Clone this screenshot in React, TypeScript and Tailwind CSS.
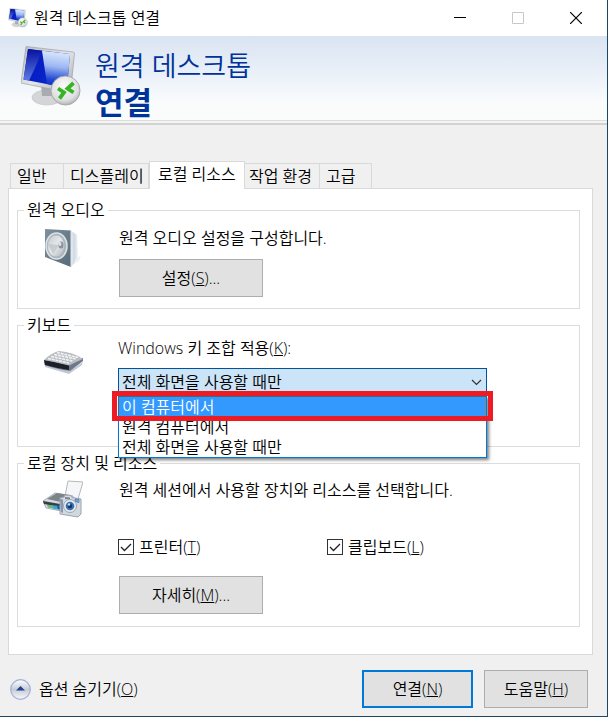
import { FC, ReactNode, useState } from 'react';

interface GroupProps {
  title: string;
  className?: string;
  icon: ReactNode;
  children: ReactNode;
}

const tabs = [
  { name: '일반', style: 'w-[54px] pl-[6px]' },
  { name: '디스플레이', style: 'w-[85px] pl-[6px]' },
  { name: '로컬 리소스', style: 'w-[96px] pl-[8px]' },
  { name: '작업 환경', style: 'w-[75px] pl-[4px]' },
  { name: '고급', style: 'w-[52px] pl-[6px]' },
];

const keyboardModes = ['이 컴퓨터에서', '원격 컴퓨터에서', '전체 화면을 사용할 때만'];

const RemoteIcon: FC<{ className: string }> = ({ className }) => (
  <svg className={className} viewBox="0 0 60 62" aria-hidden="true">
    <defs>
      <linearGradient id="screen" x1="0" y1="0.2" x2="1" y2="0.7">
        <stop offset="0" stopColor="#0a18b0" />
        <stop offset="0.45" stopColor="#0620c8" />
        <stop offset="1" stopColor="#0a34c4" />
      </linearGradient>
      <linearGradient id="glare" x1="0.3" y1="0" x2="0.2" y2="1">
        <stop offset="0" stopColor="#dbe8fc" />
        <stop offset="0.4" stopColor="#9db8f2" />
        <stop offset="0.75" stopColor="#2448d4" />
        <stop offset="1" stopColor="#0a28c4" />
      </linearGradient>
      <linearGradient id="beam" x1="0" y1="0" x2="0" y2="1">
        <stop offset="0" stopColor="#0512a0" />
        <stop offset="1" stopColor="#5d7ae6" />
      </linearGradient>
      <linearGradient id="metal" x1="0" y1="0" x2="1" y2="1">
        <stop offset="0" stopColor="#b9bcbe" />
        <stop offset="0.5" stopColor="#e4e5e6" />
        <stop offset="1" stopColor="#a5a7a9" />
      </linearGradient>
      <radialGradient id="badge" cx="0.45" cy="0.35" r="0.65">
        <stop offset="0" stopColor="#fbfbfb" />
        <stop offset="0.75" stopColor="#dedfe0" />
        <stop offset="1" stopColor="#b2b4b6" />
      </radialGradient>
    </defs>
    <ellipse cx="26" cy="51.500" rx="15" ry="7.500" fill="#d3d5d7" stroke="#c4c6c8" strokeWidth="0.700" />
    <path d="M20 38h13l-1 12h-11z" fill="#a9acaf" />
    <path d="M5 0.500 52 6l1.500 1-4 40L0 37z" fill="url(#metal)" stroke="#9fa2a5" strokeWidth="0.700" />
    <path d="M7 3 49 8l-3 34L2.500 33.500z" fill="url(#screen)" />
    <path d="M21 4.700 49 8l-3 34-20-4z" fill="url(#glare)" />
    <path d="M7 3 21 4.700 14 22l-6 12.500-5.500-1z" fill="url(#beam)" />
    <circle cx="44.500" cy="44.500" r="14.500" fill="url(#badge)" stroke="#a7a9ab" />
    <path d="m37 42.500 6 4-4.500 6M52.500 37l-6 5.500 6 4" fill="none" stroke="#35b524" strokeWidth="3.800" />
  </svg>
);

const SpeakerIcon: FC = () => (
  <svg className="h-10 w-10" viewBox="0 0 40 40" aria-hidden="true">
    <defs>
      <linearGradient id="side" x1="0" x2="1">
        <stop offset="0" stopColor="#f5f8fb" />
        <stop offset="0.5" stopColor="#cfd9e4" />
        <stop offset="1" stopColor="#eef2f6" />
      </linearGradient>
      <linearGradient id="front" x1="0" y1="0" x2="1" y2="1">
        <stop offset="0" stopColor="#7f909d" />
        <stop offset="1" stopColor="#566a78" />
      </linearGradient>
      <linearGradient id="cone" x1="0" y1="0" x2="1" y2="1">
        <stop offset="0" stopColor="#c3c9ce" />
        <stop offset="0.5" stopColor="#e6e9eb" />
        <stop offset="1" stopColor="#abb2b8" />
      </linearGradient>
    </defs>
    <path d="m27 2 7 5 1 24-7 8z" fill="url(#side)" />
    <path d="m32 32 6-5-2 6-5 3z" fill="#eef0f2" />
    <path d="m2 1 26 1.500V39L2 29z" fill="url(#front)" />
    <path d="m27.500 2.500 1.500 0.500v35.500l-1.500 0.500z" fill="#dfe6ec" />
    <ellipse cx="13.500" cy="18" rx="10.500" ry="13" fill="#aab4bc" stroke="#dde2e5" strokeWidth="1.500" />
    <ellipse cx="13" cy="18" rx="8.500" ry="11" fill="url(#cone)" stroke="#a5aeb4" strokeWidth="0.500" />
    <path d="m5 16 11 1-6 9z" fill="#b5bcc1" opacity="0.600" />
    <ellipse cx="18" cy="17" rx="2.500" ry="3.500" fill="#87929a" />
    <ellipse cx="17" cy="16" rx="1.500" ry="2" fill="#dfe3e6" />
  </svg>
);

const KeyboardIcon: FC = () => (
  <svg className="h-10 w-10" viewBox="0 0 40 40" aria-hidden="true">
    <path d="M1 24 26 33l14-9-1 3-13 9L2 29z" fill="#9aa3b8" opacity="0.600" />
    <path d="m1 22 1 5q11 4 25 6l13-10v-3z" fill="#6f778b" />
    <path d="m1 22 1 5q11 3 24 5v-5z" fill="#1d2026" />
    <path d="M1 22q7-7 15-9 14 1 24 8-7 3-14 6.500-13-3.500-25-5.500z" fill="#b9bcc1" />
    <g stroke="#f2f3f5" strokeWidth="1.600" strokeDasharray="3 0.800">
      <path d="m5 20.500 21 4.500" />
      <path d="m8 18.500 21.500 4.500" />
      <path d="m11 16.500 22 4.500" />
      <path d="m14 14.500 21 5" />
    </g>
  </svg>
);

const DevicesIcon: FC = () => (
  <svg className="h-10 w-10" viewBox="0 0 40 40" aria-hidden="true">
    <path d="m25 2 15 1-5 17-13-3z" fill="#f5f6f7" stroke="#b4b8bc" />
    <path d="m0 22 12-8 18 3v9l-12 6-15-3z" fill="#d5d9dd" stroke="#8f969c" strokeWidth="0.700" />
    <path d="m4 20 10-6 12 2-8 7z" fill="#7c848a" />
    <path d="m0 22 17 3v3L1 25z" fill="#383e43" />
    <path d="m5 26 12 1 2 4-8-1z" fill="#36a7d6" />
    <path d="m4 26 5 0.500 2 3-6-1z" fill="#69b86c" />
    <path d="m14 27 3 0.500 2 3.500-4-1z" fill="#1a4d9c" />
    <path d="m17 19 4-1 1-2 6 0.500 1 2 9 1.500v15l-3 3-18-3z" fill="#d3d8de" stroke="#9aa4b0" />
    <path d="m17 20 3 0.500V34l-2-1z" fill="#8798ab" />
    <path d="m22 18 5 0.500v2L22 20z" fill="#778799" />
    <path d="m32 20 4 0.500v3l-4-1z" fill="#6fa5df" stroke="#3c6ca8" strokeWidth="0.600" />
    <circle cx="27" cy="27" r="6.500" fill="#e6eaee" stroke="#9ba8b7" />
    <circle cx="27" cy="27" r="4.300" fill="#3b6faf" />
    <circle cx="27" cy="27" r="2.200" fill="#16345f" />
    <circle cx="26" cy="25.500" r="1.200" fill="#b5dcff" />
  </svg>
);

const Group: FC<GroupProps> = ({ title, className, icon, children }) => (
  <fieldset className={`border border-[#dcdcdc] ${className}`}>
    <legend className="ml-[6px] px-[3px]">{title}</legend>
    <div className="grid grid-cols-[100px_1fr]">
      <div className="pl-[25px]">{icon}</div>
      <div>{children}</div>
    </div>
  </fieldset>
);

const CheckOption: FC<{ id: string; label: string; accessKey: string }> = ({ id, label, accessKey }) => (
  <div className="flex items-center gap-[5px]">
    <span className="relative flex h-4 w-4">
      <input id={id} type="checkbox" defaultChecked className="peer h-4 w-4 appearance-none border border-[#333333] bg-white" />
      <svg className="pointer-events-none absolute inset-0 hidden h-4 w-4 peer-checked:block" viewBox="0 0 16 16" aria-hidden="true">
        <path d="m3 8 3.500 3.500L13 5" fill="none" stroke="#222" strokeWidth="1.300" />
      </svg>
    </span>
    <label htmlFor={id}>
      {label}(<u>{accessKey}</u>)
    </label>
  </div>
);

const App: FC = () => {
  const [activeTab, setActiveTab] = useState('로컬 리소스');
  const [mode, setMode] = useState(keyboardModes[2]);
  const buttonStyle = 'h-[38px] border border-[#adadad] bg-[#e1e1e1]';

  return (
    <div className="bg-white pr-1 font-['Open_Sans','Noto_Sans_CJK_KR',sans-serif] text-[16px] leading-[22px] font-[350] text-black">
      <div className="border-r border-b border-[#1c4766] bg-[#f0f0f0]">
        <header className="flex h-9 items-center bg-white pl-2">
          <RemoteIcon className="h-5 w-5" />
          <h1 className="ml-[6px] grow">원격 데스크톱 연결</h1>
          <div className="flex pr-[2px]">
            <button aria-label="최소화" className="flex h-9 w-[58px] items-center justify-center">
              <svg className="h-3 w-3" viewBox="0 0 12 12"><path d="M0 5.500h12" stroke="#000" /></svg>
            </button>
            <button aria-label="최대화" disabled className="flex h-9 w-[58px] items-center justify-center">
              <svg className="h-3 w-3" viewBox="0 0 12 12"><path d="M.5.5h11v11H.5z" fill="none" stroke="#c8c8c8" /></svg>
            </button>
            <button aria-label="닫기" className="flex h-9 w-[58px] items-center justify-center">
              <svg className="h-3 w-3" viewBox="0 0 12 12"><path d="m0 0 12 12M12 0 0 12" stroke="#000" strokeWidth="1.200" /></svg>
            </button>
          </div>
        </header>

        <div className="flex h-[84px] bg-linear-to-b from-[#dae4f1] via-[#e8eff8] via-40% to-[#fafcfc] to-80% pl-[21px]">
          <RemoteIcon className="mt-[10px] h-[62px] w-[60px]" />
          <h2 className="ml-[14px] pt-3 text-[#003399]">
            <span className="block text-[27px] leading-9">원격 데스크톱</span>
            <span className="block text-[31px] leading-9 font-bold">연결</span>
          </h2>
        </div>
        <div className="h-[5px] border-t border-b-2 border-t-[#dddddd] border-b-[#d2d2d2] bg-[#f4f4f4]" />

        <main className="pt-9 pr-[14px] pl-2">
          <div role="tablist" className="relative z-10 -mb-px flex items-end pl-[2px]">
            {tabs.map((tab) => (
              <button
                key={tab.name}
                role="tab"
                aria-selected={tab.name === activeTab}
                onClick={() => setActiveTab(tab.name)}
                className={`border-[#d9d9d9] text-left whitespace-nowrap ${tab.style} ${
                  tab.name === activeTab ? 'h-7 border-x border-t bg-white pb-[3px]' : 'h-[26px] border-y border-r bg-[#f0f0f0] first:border-l'
                }`}
              >
                {tab.name}
              </button>
            ))}
          </div>

          <div role="tabpanel" className="border border-[#d9d9d9] bg-white pt-[10px] pr-3 pb-[27px] pl-2">
            <Group title="원격 오디오" className="pb-[11px]" icon={<div className="pt-[7px]"><SpeakerIcon /></div>}>
              <p className="pt-[6px] pb-[10px] pl-px">원격 오디오 설정을 구성합니다.</p>
              <button className={`ml-px w-36 ${buttonStyle}`}>
                설정(<u>S</u>)...
              </button>
            </Group>

            <Group title="키보드" className="mt-[5px] pb-[50px]" icon={<div className="pt-[2px]"><KeyboardIcon /></div>}>
              <label htmlFor="keyboard-mode" className="block pt-px pb-[9px]">
                Windows 키 조합 적용(<u>K</u>):
              </label>
              <div className="relative h-7 w-[369px]">
                <select
                  id="keyboard-mode"
                  value={mode}
                  onChange={(e) => setMode(e.target.value)}
                  className="h-7 w-full appearance-none border border-[#005499] bg-[#cce4f7] pl-[3px]"
                >
                  {keyboardModes.map((item) => (
                    <option key={item}>{item}</option>
                  ))}
                </select>
                <svg className="pointer-events-none absolute top-[11px] right-[5px] h-[7px] w-[11px]" viewBox="0 0 11 7" aria-hidden="true">
                  <path d="m1 1 4.500 4.500L10 1" fill="none" stroke="#333" strokeWidth="1.200" />
                </svg>
                <ul
                  role="listbox"
                  className="absolute top-7 left-0 z-20 w-full border border-[#0078d7] bg-white leading-5 shadow-[2px_2px_3px_rgba(0,0,0,0.5)]"
                >
                  {keyboardModes.map((item, i) => (
                    <li
                      key={item}
                      role="option"
                      aria-selected={i === 0}
                      onClick={() => setMode(item)}
                      className={`h-5 pl-[3px] ${i === 0 ? 'bg-[#3399ff] text-white outline-1 -outline-offset-1 outline-dotted outline-[#b97a3a]' : ''}`}
                    >
                      {item}
                    </li>
                  ))}
                </ul>
                <div className="pointer-events-none absolute top-[23px] -right-[6px] -left-[6px] z-30 h-[30px] border-5 border-[#ed1c24]" />
              </div>
            </Group>

            <Group title="로컬 장치 및 리소스" className="mt-[5px] pb-3" icon={<div className="pt-[5px]"><DevicesIcon /></div>}>
              <p className="pt-[5px] pb-[35px] pl-px">원격 세션에서 사용할 장치와 리소스를 선택합니다.</p>
              <div className="grid grid-cols-[209px_1fr] pb-[18px]">
                <CheckOption id="printer" label="프린터" accessKey="T" />
                <CheckOption id="clipboard" label="클립보드" accessKey="L" />
              </div>
              <button className={`ml-px w-36 ${buttonStyle}`}>
                자세히(<u>M</u>)...
              </button>
            </Group>
          </div>
        </main>

        <footer className="flex items-center pt-[15px] pr-[19px] pb-2 pl-[10px]">
          <button className="flex items-center gap-2">
            <svg className="h-[21px] w-[21px]" viewBox="0 0 21 21" aria-hidden="true">
              <defs>
                <linearGradient id="round" x1="0" y1="0" x2="0" y2="1">
                  <stop offset="0" stopColor="#ffffff" />
                  <stop offset="0.5" stopColor="#c6ccd6" />
                  <stop offset="1" stopColor="#f7f9fc" />
                </linearGradient>
              </defs>
              <circle cx="10.500" cy="10.500" r="9.800" fill="url(#round)" stroke="#a3add6" strokeWidth="1.200" />
              <path d="m10.500 7 4.500 4.500H6z" fill="#23408f" />
            </svg>
            <span>
              옵션 숨기기(<u>O</u>)
            </span>
          </button>
          <button className="ml-auto h-[38px] w-[111px] border-2 border-[#0078d7] bg-[#e1e1e1]">
            연결(<u>N</u>)
          </button>
          <button className={`ml-[11px] w-[104px] ${buttonStyle}`}>
            도움말(<u>H</u>)
          </button>
        </footer>
      </div>
    </div>
  );
};

export default App;
